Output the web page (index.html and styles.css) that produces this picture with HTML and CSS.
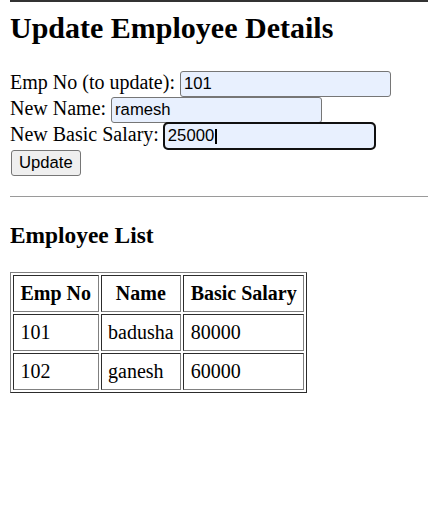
FILE: index.html
```html
<!DOCTYPE html>
<html>
<head>
<meta charset="utf-8">
<link rel="stylesheet" href="styles.css">
</head>
<body>
<div class="topbar"></div>
<h1 class="title">Update Employee Details</h1>
<form class="form">
Emp No (to update): <input class="field" type="text" value="101"><br>
New Name: <input class="field" type="text" value="ramesh"><br>
New Basic Salary: <span class="focus-wrap"><input class="field focused" type="text" value="25000"><span class="caret"></span></span><br>
<button class="btn" type="button">Update</button>
</form>
<hr class="rule">
<h3 class="subtitle">Employee List</h3>
<table class="list">
<tr><th>Emp No</th><th>Name</th><th>Basic Salary</th></tr>
<tr><td>101</td><td>badusha</td><td>80000</td></tr>
<tr><td>102</td><td>ganesh</td><td>60000</td></tr>
</table>
</body>
</html>
```
FILE: styles.css
```css
html { margin: 0; padding: 0; }
body {
  margin: 0 10px 10px 10px;
  font-family: "Liberation Serif", "Times New Roman", serif;
  font-size: 20px;
  color: #000;
  background: #fff;
}
.topbar {
  height: 2px;
  background: #333;
  margin: 0 -10px;
}
.title {
  font-size: 30px;
  font-weight: bold;
  margin: 9px 0 26px 0;
}
.form { margin: 0 0 20px 0; }
.field {
  font-family: "Liberation Sans", Arial, sans-serif;
  font-size: 16.67px;
  width: 211px;
  height: 26px;
  box-sizing: border-box;
  padding: 1px 3px;
  border: 1px solid #767676;
  border-radius: 3px;
  background: #e8f0fe;
  color: #000;
  margin: 0;
  vertical-align: baseline;
}
.focus-wrap {
  position: relative;
  display: inline-block;
}
.focused {
  outline: 2px solid #101010;
  outline-offset: -1px;
  border-radius: 4px;
}
.caret {
  position: absolute;
  left: 51px;
  top: 6px;
  width: 2px;
  height: 15px;
  background: #000;
}
.btn {
  font-family: "Liberation Sans", Arial, sans-serif;
  font-size: 16.67px;
  height: 26px;
  box-sizing: border-box;
  padding: 1px 7px;
  border: 1px solid #767676;
  border-radius: 3px;
  background: #efefef;
  color: #000;
  margin: 1px 0 0 1px;
}
.rule {
  height: 0;
  border: 0;
  border-top: 1px solid #9a9a9a;
  margin: 0 -10px 0 0;
}
.subtitle {
  font-size: 23.4px;
  font-weight: bold;
  margin: 25px 0 23px 0;
}
.list {
  border: 1px outset #808080;
  border-spacing: 2px;
}
.list th, .list td {
  border: 1px inset #808080;
  padding: 6px 6.5px;
}
```
